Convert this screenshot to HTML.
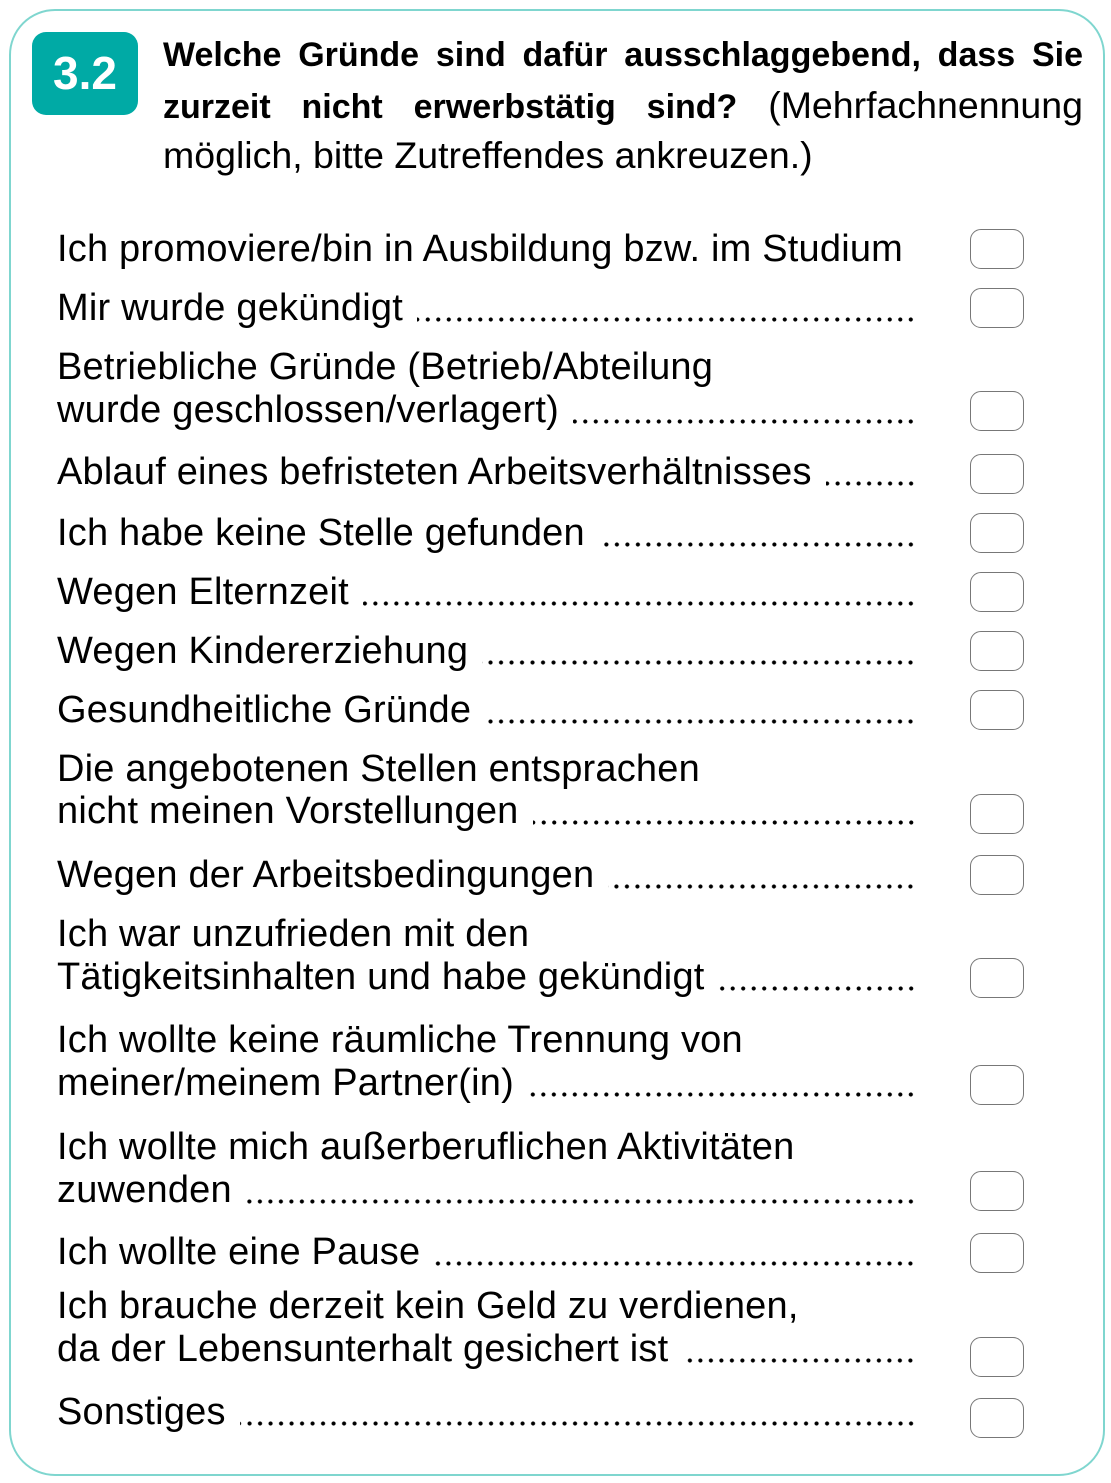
<!DOCTYPE html>
<html><head><meta charset="utf-8"><style>
html,body{margin:0;padding:0;background:#fff;}
body{width:1111px;height:1483px;position:relative;overflow:hidden;font-family:"Liberation Sans",sans-serif;color:#000;}
.frame{position:absolute;left:9px;top:9px;width:1096px;height:1467px;border:2px solid #7fd6cf;border-radius:46px;box-sizing:border-box;}
.badge{position:absolute;left:32px;top:32px;width:106px;height:83px;background:#00aaa5;border-radius:14px;color:#fff;font-weight:bold;font-size:46px;line-height:83px;text-align:center;}
.q{position:absolute;left:163px;width:920px;font-size:34px;line-height:50px;}
.q .j{text-align:justify;text-align-last:justify;height:50px;overflow:hidden;}
.q .r{font-size:37.5px;}
.l{position:absolute;left:57px;width:859px;height:44px;line-height:44px;font-size:38px;letter-spacing:0.2px;display:flex;white-space:nowrap;}
.l .f{flex:1;margin-left:14px;background:radial-gradient(circle,#000 1.8px,transparent 2.3px) right 30px/10.5px 7px repeat-x;}
.cb{position:absolute;left:970px;width:54px;height:40px;border:1.3px solid #777;border-radius:11px;box-sizing:border-box;}
</style></head><body>
<div class="frame"></div>
<div class="badge">3.2</div>
<div class="q" style="top:30px"><div class="j"><b>Welche Gründe sind dafür ausschlaggebend, dass Sie</b></div><div class="j"><b>zurzeit nicht erwerbstätig sind?</b> <span class="r">(Mehrfachnennung</span></div><div class="r">möglich, bitte Zutreffendes ankreuzen.)</div></div>

<div class="l" style="top:227px">Ich promoviere/bin in Ausbildung bzw. im Studium</div>
<div class="l" style="top:286px">Mir wurde gekündigt<span class="f"></span></div>
<div class="l" style="top:345px">Betriebliche Gründe (Betrieb/Abteilung</div>
<div class="l" style="top:388px">wurde geschlossen/verlagert)<span class="f"></span></div>
<div class="l" style="top:450px">Ablauf eines befristeten Arbeitsverhältnisses<span class="f"></span></div>
<div class="l" style="top:511px">Ich habe keine Stelle gefunden<span class="f"></span></div>
<div class="l" style="top:570px">Wegen Elternzeit<span class="f"></span></div>
<div class="l" style="top:629px">Wegen Kindererziehung<span class="f"></span></div>
<div class="l" style="top:688px">Gesundheitliche Gründe<span class="f"></span></div>
<div class="l" style="top:747px">Die angebotenen Stellen entsprachen</div>
<div class="l" style="top:789px">nicht meinen Vorstellungen<span class="f"></span></div>
<div class="l" style="top:853px">Wegen der Arbeitsbedingungen<span class="f"></span></div>
<div class="l" style="top:912px">Ich war unzufrieden mit den</div>
<div class="l" style="top:955px">Tätigkeitsinhalten und habe gekündigt<span class="f"></span></div>
<div class="l" style="top:1018px">Ich wollte keine räumliche Trennung von</div>
<div class="l" style="top:1061px">meiner/meinem Partner(in)<span class="f"></span></div>
<div class="l" style="top:1125px">Ich wollte mich außerberuflichen Aktivitäten</div>
<div class="l" style="top:1168px">zuwenden<span class="f"></span></div>
<div class="l" style="top:1230px">Ich wollte eine Pause<span class="f"></span></div>
<div class="l" style="top:1284px">Ich brauche derzeit kein Geld zu verdienen,</div>
<div class="l" style="top:1327px">da der Lebensunterhalt gesichert ist<span class="f"></span></div>
<div class="l" style="top:1390px">Sonstiges<span class="f"></span></div>

<div class="cb" style="top:229px"></div>
<div class="cb" style="top:288px"></div>
<div class="cb" style="top:391px"></div>
<div class="cb" style="top:454px"></div>
<div class="cb" style="top:513px"></div>
<div class="cb" style="top:572px"></div>
<div class="cb" style="top:631px"></div>
<div class="cb" style="top:690px"></div>
<div class="cb" style="top:794px"></div>
<div class="cb" style="top:855px"></div>
<div class="cb" style="top:958px"></div>
<div class="cb" style="top:1065px"></div>
<div class="cb" style="top:1171px"></div>
<div class="cb" style="top:1233px"></div>
<div class="cb" style="top:1337px"></div>
<div class="cb" style="top:1398px"></div>
</body></html>
